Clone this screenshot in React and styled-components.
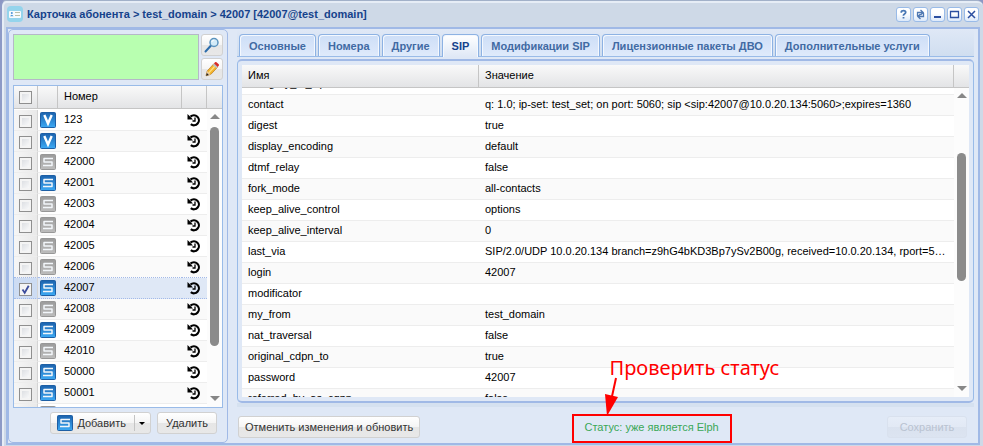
import React, { useLayoutEffect, useRef } from "react";
import styled, { createGlobalStyle, css } from "styled-components";

const GlobalStyle = createGlobalStyle`
  * {
    box-sizing: border-box;
  }
  body {
    margin: 0;
    background: #8c96c4;
    font-family: "Liberation Sans", Arial, sans-serif;
    font-size: 11px;
    color: #000;
  }
  button {
    font-family: inherit;
    font-size: 11px;
    color: #333;
    cursor: pointer;
  }
`;

const Window = styled.main`
  display: flex;
  flex-direction: column;
  height: 100vh;
  padding: 0 3px 1px 4px;
  background: #ced9e7;
  border-top: 1px solid #a2b1c9;
  border-left: 2px solid #8d9ac6;
  border-radius: 6px 6px 0 0;
  box-shadow: inset 1px 1px 0 1px #e6edf6;
`;

const TitleBar = styled.header`
  display: flex;
  align-items: center;
  gap: 4px;
  height: 26px;
  padding: 0 1px;
`;

const Title = styled.h1`
  flex: 1;
  margin: 0;
  font-size: 11px;
  line-height: 16px;
  color: #15428b;
`;

const Tools = styled.div`
  display: flex;
  gap: 2px;
`;

const Tool = styled.button`
  display: flex;
  width: 15px;
  height: 15px;
  padding: 0;
  border: 1px solid #99bbe8;
  border-radius: 3px;
  background: linear-gradient(#fff 40%, #dce9fa);
`;

const WindowBody = styled.div`
  flex: 1;
  display: flex;
  gap: 9px;
  min-height: 0;
  border: 2px solid #a0b9e6;
  background: #dfe8f6;
`;

const Sidebar = styled.aside`
  display: flex;
  flex-direction: column;
  width: 220px;
  padding: 4px 4px 8px;
  border: 1px solid #a0b9e6;
  border-radius: 5px;
`;

const SearchRow = styled.div`
  display: flex;
  gap: 2px;
  margin-bottom: 5px;
`;

const Filter = styled.textarea`
  flex: 1;
  min-width: 0;
  height: 46px;
  padding: 2px;
  border: 1px solid #b5b8c8;
  background: #b8ffb0;
  resize: none;
  outline: none;
`;

const SearchButtons = styled.div`
  display: flex;
  flex-direction: column;
  gap: 2px;
`;

const raised = css`
  border: 1px solid #d1d1d1;
  border-radius: 3px;
  background: linear-gradient(#fff, #f5f5f5 48%, #e6e6e6 52%, #e8e8e8);
`;

const IconButton = styled.button`
  ${raised}
  display: flex;
  align-items: center;
  justify-content: center;
  width: 22px;
  height: 22px;
  padding: 0;
`;

const Grid = styled.section`
  flex: 1;
  display: flex;
  flex-direction: column;
  min-width: 0;
  min-height: 0;
  border: ${p => (p.$framed ? "1px solid #99bbe8" : "0")};
  background: #fff;
`;

const GridTable = styled.table`
  width: 100%;
  table-layout: fixed;
  border-collapse: separate;
  border-spacing: 0;
`;

const Col = styled.col`
  width: ${p => (p.$width ? `${p.$width}px` : "auto")};
`;

const HeadCell = styled.th`
  height: 23px;
  padding: 0 6px 2px ${p => (p.$check ? 5 : 6)}px;
  border-right: 1px solid #c5c5c5;
  border-bottom: 1px solid #c5c5c5;
  background: linear-gradient(#f9f9f9, #e3e4e6);
  font-weight: normal;
  text-align: left;
  line-height: 13px;
  &:last-child {
    border-right: 0;
  }
`;

const GridBody = styled.div`
  flex: 1;
  display: flex;
  min-height: 0;
`;

const Viewport = styled.div`
  flex: 1;
  min-width: 0;
  overflow: hidden;
  padding-top: ${p => (p.$inset ? 1 : 0)}px;
`;

const Row = styled.tr`
  background: #fff;
  &:nth-child(even) {
    background: #fafafa;
  }
  &&[aria-selected="true"] {
    background: #dfe8f6;
  }
  &&[aria-selected="true"] td,
  &&:has(+ [aria-selected="true"]) td {
    border-bottom: 1px dotted #a3bae9;
  }
`;

const Cell = styled.td`
  height: 21px;
  padding: 0 6px 2px;
  border-bottom: 1px solid #ededed;
  line-height: 13px;
  white-space: nowrap;
  overflow: hidden;
  text-overflow: ellipsis;
`;

const CheckCell = styled(Cell)`
  padding: 0 0 0 5px;
  border-right: 1px solid #d4d4d4;
  background: ${p => (p.$selected ? "#cddcf3" : "linear-gradient(90deg, #f6f6f6, #e9e9e9)")};
`;

const IconCell = styled(Cell)`
  padding: 0 0 0 ${p => (p.$history ? 5 : 2)}px;
  text-overflow: clip;
  svg {
    display: block;
  }
`;

const Check = styled.input`
  display: block;
  appearance: none;
  width: 13px;
  height: 13px;
  margin: 2px 0 0;
  border: 1px solid #8f8f8f;
  background: linear-gradient(135deg, #d5d8dd, #fff);
  box-shadow: inset 0 0 0 2px #f4f4f4;
  &:checked {
    background: url("data:image/svg+xml,%3Csvg xmlns='http://www.w3.org/2000/svg' viewBox='0 0 11 11'%3E%3Cpath d='M2.5 5.5 4.7 8.8 8.7 1.7' fill='none' stroke='%233c4c9c' stroke-width='1.8'/%3E%3C/svg%3E");
    background-color: #f4f4f4;
    box-shadow: none;
  }
`;

const ScrollBar = styled.div`
  display: flex;
  flex-direction: column;
  align-items: center;
  width: 15px;
  padding: 5px 0 6px;
  background: #fcfcfc;
`;

const Arrow = styled.span`
  border: 5px solid transparent;
  border-top: ${p => (p.$down ? "5px solid #878787" : "0")};
  border-bottom: ${p => (p.$down ? "0" : "5px solid #878787")};
`;

const Track = styled.div`
  flex: 1;
  display: flex;
  flex-direction: column;
  padding: 8px 0;
`;

const Thumb = styled.div`
  width: 9px;
  border-radius: 5px;
  background: #8b8b8b;
`;

const SidebarActions = styled.div`
  display: flex;
  justify-content: flex-end;
  gap: 6px;
  padding: 4px 6px 0 0;
`;

const Button = styled.button`
  ${raised}
  display: flex;
  align-items: center;
  justify-content: center;
  height: 22px;
  min-width: ${p => p.$minWidth || 0}px;
  padding: 0 6px;
  line-height: 16px;
  white-space: nowrap;
  &:disabled {
    color: #b9c2d1;
    border-color: #d9e1ee;
    background: linear-gradient(#e6edf8, #e2e9f5 48%, #dae2ef 52%, #dce4f1);
  }
`;

const SplitButton = styled.div`
  ${raised}
  display: flex;
  height: 22px;
`;

const SplitPart = styled.button`
  display: flex;
  align-items: center;
  gap: 4px;
  padding: 0 8px 0 6px;
  border: 0;
  background: none;
  white-space: nowrap;
`;

const MenuPart = styled.button`
  display: flex;
  align-items: center;
  padding: 0 5px 0 4px;
  margin: 2px 0;
  border: 0;
  border-left: 1px solid #c4c4c4;
  background: none;
`;

const Caret = styled.span`
  border: 3px solid transparent;
  border-top-color: #000;
  border-bottom: 0;
`;

const Content = styled.section`
  flex: 1;
  display: flex;
  flex-direction: column;
  min-width: 0;
  padding-right: 4px;
`;

const TabStrip = styled.nav`
  display: flex;
  align-items: flex-end;
  gap: 2px;
  height: 28px;
  padding: 0 2px;
  border-bottom: 1px solid #99bbe8;
  background: linear-gradient(#dfe8f6, #d0def0);
`;

const Tab = styled.button`
  height: ${p => (p.$active ? 23 : 22)}px;
  margin-bottom: ${p => (p.$active ? -1 : 0)}px;
  padding: 1px 9px ${p => (p.$active ? 1 : 0)}px;
  border: 1px solid #8db2e3;
  border-bottom: 0;
  border-radius: 4px 4px 0 0;
  background: ${p => (p.$active ? "linear-gradient(#fff, #dfe8f6)" : "linear-gradient(#cddef7, #dfeafb)")};
  box-shadow: inset 1px 1px 0 #f4f8fe, inset -1px 0 0 #f4f8fe;
  color: ${p => (p.$active ? "#15428b" : "#416aa3")};
  font-weight: bold;
  line-height: 16px;
  white-space: nowrap;
`;

const Panel = styled.div`
  flex: 1;
  display: flex;
  min-height: 0;
  margin-top: 2px;
  padding: 4px;
  border: 1px solid #99bbe8;
  border-top: 2px solid #a0b9e6;
  border-bottom: 2px solid #a0b9e6;
  border-radius: 5px;
`;

const Footer = styled.footer`
  display: flex;
  align-items: center;
  justify-content: space-between;
  height: 40px;
  padding: 4px 7px 0 1px;
  border-top: 4px solid #d5e1f0;
`;

const StatusCallout = styled.div`
  position: relative;
  height: 29px;
  padding: 0 11px;
  margin: 2px 4px 0 0;
  border: 2px solid #f00;
  color: #3aa757;
  line-height: 23px;
  white-space: nowrap;
`;

const Note = styled.div`
  position: absolute;
  left: 36px;
  bottom: 57px;
  color: #f00;
  font-family: "Noto Sans", sans-serif;
  font-size: 20px;
  line-height: 32px;
`;

const NoteArrow = styled.svg`
  position: absolute;
  left: 27px;
  bottom: 24px;
`;

const SIcon = ({ on, letter = "S" }) => (
  <svg width="16" height="16" viewBox="0 0 16 16" aria-hidden="true">
    <defs>
      <linearGradient id="icon-on" x2="0" y2="1">
        <stop stopColor="#1c62ad" />
        <stop offset="1" stopColor="#3caaf5" />
      </linearGradient>
      <linearGradient id="icon-off" x2="0" y2="1">
        <stop stopColor="#9b9b9b" />
        <stop offset="1" stopColor="#bdbdbd" />
      </linearGradient>
    </defs>
    <rect x=".5" y=".5" width="15" height="15" rx="1" fill={on ? "url(#icon-on)" : "url(#icon-off)"} stroke={on ? "#1d5fa5" : "#979797"} />
    {letter === "V" ? (
      <path d="M4.300 3 8 11.500 11.700 3" fill="none" stroke="#fff" strokeWidth="2.400" />
    ) : (
      <path d="M13 4.500H4V8h8v3.500H3" fill="none" stroke="#f2f6fa" strokeWidth="1.500" strokeLinejoin="round" />
    )}
  </svg>
);

const HistoryIcon = () => (
  <svg width="14" height="14" viewBox="0 0 14 14" fill="none" stroke="#000" aria-hidden="true">
    <path d="M3.500 3.600A5 5 0 1 1 3.800 11.200" strokeWidth="2.200" />
    <path d="M.5 1v5.500H6z" fill="#000" stroke="none" />
    <path d="M8 4.500v3.500H5.500" strokeWidth="1.300" />
  </svg>
);

const SearchIcon = () => (
  <svg width="16" height="16" viewBox="0 0 16 16" aria-hidden="true">
    <path d="M1.500 14.500 7 8.500" stroke="#2c6cab" strokeWidth="2" strokeLinecap="round" />
    <circle cx="10" cy="5.500" r="4" fill="#d3ebf8" stroke="#5b93bd" strokeWidth="1.500" />
    <path d="M7.800 5a2.500 2.500 0 0 1 2.500-2" fill="none" stroke="#fff" />
  </svg>
);

const PencilIcon = () => (
  <svg width="16" height="16" viewBox="0 0 16 16" aria-hidden="true">
    <path d="m2 14.800 1.200-4.800 6.400-7 3.800 3.400-6.600 7z" fill="#f4b52d" stroke="#b9791c" strokeWidth=".7" />
    <path d="M4.800 11.800 11.500 4.500" stroke="#ffe083" strokeWidth="1.200" />
    <path d="m2 14.800 1.200-4.800 3.600 3.400z" fill="#eacb9c" />
    <path d="m2 14.800.8-2.900 2.100 2z" fill="#222" />
    <path d="m8.800 3.900 1.300-1.400 3.800 3.400-1.300 1.400z" fill="#b8c3c8" />
    <path d="m10 2.500 1-1.200q.7-.7 1.500 0l2.200 2q.8.8 0 1.500l-1 1.100z" fill="#d62c25" />
  </svg>
);

const CardIcon = () => (
  <svg width="16" height="16" viewBox="0 0 16 16" aria-hidden="true">
    <rect width="16" height="16" rx="4" fill="#94d4ec" />
    <rect x="2" y="5" width="12" height="7" rx="1" fill="#f7fbfd" />
    <circle cx="4.800" cy="7" r="1" fill="#4a94d8" />
    <path d="M3 10.300q1.800-3 3.600 0z" fill="#4a94d8" />
    <path d="M8 6.500h5M8 9.500h5" stroke="#b9bfa9" />
  </svg>
);

const toolGlyphs = {
  "Справка": <path d="M4.300 4.800V4q0-1.400 2.200-1.400T8.700 4.300Q8.700 5.200 7.500 6T6.500 7.800M6.500 9v1.600" strokeWidth="1.800" stroke="#4a78b5" />,
  "Обновить": <path d="M3.500 8V4.500h5M6.500 2l2.700 2.500L6.500 7M9.500 5v3.500h-5M6.500 11 3.800 8.500 6.500 6" strokeWidth="1.300" stroke="#5079b2" />,
  "Свернуть": <path d="M3 9h7" strokeWidth="2" />,
  "Развернуть": <path d="M2.500 3.500h8v6h-8zM2 3.500h9" strokeWidth="1.300" />,
  "Закрыть": <path d="m3 3 7 7M10 3l-7 7" strokeWidth="1.500" />
};

const subscribers = [
  ["123", true, "V"],
  ["222", true, "V"],
  ["42000", false],
  ["42001", true],
  ["42003", false],
  ["42004", false],
  ["42005", false],
  ["42006", false],
  ["42007", true],
  ["42008", false],
  ["42009", true],
  ["42010", false],
  ["50000", true],
  ["50001", true],
  ["50002", false]
];

const tabs = ["Основные", "Номера", "Другие", "SIP", "Модификации SIP", "Лицензионные пакеты ДВО", "Дополнительные услуги"];

const params = [
  ["category_to_sip", ""],
  ["contact", "q: 1.0; ip-set: test_set; on port: 5060; sip <sip:42007@10.0.20.134:5060>;expires=1360"],
  ["digest", "true"],
  ["display_encoding", "default"],
  ["dtmf_relay", "false"],
  ["fork_mode", "all-contacts"],
  ["keep_alive_control", "options"],
  ["keep_alive_interval", "0"],
  ["last_via", "SIP/2.0/UDP 10.0.20.134 branch=z9hG4bKD3Bp7ySv2B00g, received=10.0.20.134, rport=5060"],
  ["login", "42007"],
  ["modificator", ""],
  ["my_from", "test_domain"],
  ["nat_traversal", "false"],
  ["original_cdpn_to", "true"],
  ["password", "42007"],
  ["referred_by_as_cgpn", "false"]
];

const Scroller = ({ start, size, end }) => (
  <ScrollBar aria-hidden="true">
    <Arrow />
    <Track>
      <div style={{ flex: start }} />
      <Thumb style={{ flex: size }} />
      <div style={{ flex: end }} />
    </Track>
    <Arrow $down />
  </ScrollBar>
);

const Cols = ({ widths }) => (
  <colgroup>
    {widths.map((width, i) => (
      <Col key={i} $width={width} />
    ))}
  </colgroup>
);

const SubscriberGrid = () => (
  <Grid $framed>
    <GridTable>
      <Cols widths={[24, 20, null, 25, 15]} />
      <thead>
        <tr>
          <HeadCell $check>
            <Check type="checkbox" aria-label="Выбрать все" />
          </HeadCell>
          <HeadCell />
          <HeadCell>Номер</HeadCell>
          <HeadCell />
          <HeadCell />
        </tr>
      </thead>
    </GridTable>
    <GridBody>
      <Viewport $inset>
        <GridTable>
          <Cols widths={[24, 20, null, 25]} />
          <tbody>
            {subscribers.map(([number, on, letter]) => {
              const selected = number === "42007";
              return (
                <Row key={number} aria-selected={selected}>
                  <CheckCell $selected={selected}>
                    <Check type="checkbox" aria-label={number} defaultChecked={selected} />
                  </CheckCell>
                  <IconCell>
                    <SIcon on={on} letter={letter} />
                  </IconCell>
                  <Cell>{number}</Cell>
                  <IconCell $history>
                    <HistoryIcon />
                  </IconCell>
                </Row>
              );
            })}
          </tbody>
        </GridTable>
      </Viewport>
      <Scroller start={0} size={218} end={42} />
    </GridBody>
  </Grid>
);

const ParamGrid = () => {
  const viewport = useRef(null);

  useLayoutEffect(() => {
    viewport.current.scrollTop = 14;
  }, []);

  return (
    <Grid>
      <GridTable>
        <Cols widths={[237, null, 15]} />
        <thead>
          <tr>
            <HeadCell>Имя</HeadCell>
            <HeadCell>Значение</HeadCell>
            <HeadCell />
          </tr>
        </thead>
      </GridTable>
      <GridBody>
        <Viewport ref={viewport}>
          <GridTable>
            <Cols widths={[237, null]} />
            <tbody>
              {params.map(([name, value]) => (
                <Row key={name}>
                  <Cell>{name}</Cell>
                  <Cell>{value}</Cell>
                </Row>
              ))}
            </tbody>
          </GridTable>
        </Viewport>
        <Scroller start={46} size={126} end={95} />
      </GridBody>
    </Grid>
  );
};

const App = () => (
  <>
    <GlobalStyle />
    <Window>
      <TitleBar>
        <CardIcon />
        <Title>Карточка абонента &gt; test_domain &gt; 42007 [42007@test_domain]</Title>
        <Tools>
          {Object.entries(toolGlyphs).map(([label, glyph]) => (
            <Tool key={label} aria-label={label}>
              <svg width="13" height="13" viewBox="0 0 13 13" fill="none" stroke="#2c4fa0">
                {glyph}
              </svg>
            </Tool>
          ))}
        </Tools>
      </TitleBar>
      <WindowBody>
        <Sidebar>
          <SearchRow>
            <Filter aria-label="Фильтр" />
            <SearchButtons>
              <IconButton aria-label="Найти">
                <SearchIcon />
              </IconButton>
              <IconButton aria-label="Изменить">
                <PencilIcon />
              </IconButton>
            </SearchButtons>
          </SearchRow>
          <SubscriberGrid />
          <SidebarActions>
            <SplitButton>
              <SplitPart>
                <SIcon on />
                Добавить
              </SplitPart>
              <MenuPart aria-label="Варианты добавления">
                <Caret />
              </MenuPart>
            </SplitButton>
            <Button $minWidth={60}>Удалить</Button>
          </SidebarActions>
        </Sidebar>
        <Content>
          <TabStrip>
            {tabs.map(tab => (
              <Tab key={tab} $active={tab === "SIP"}>
                {tab}
              </Tab>
            ))}
          </TabStrip>
          <Panel>
            <ParamGrid />
          </Panel>
          <Footer>
            <Button>Отменить изменения и обновить</Button>
            <StatusCallout>
              Статус: уже является Elph
              <NoteArrow width="20" height="40" viewBox="0 0 20 40" aria-hidden="true">
                <path d="M15 1 10 24" stroke="#f00" strokeWidth="2" />
                <path d="M4 17 17 20 6 39z" fill="#f00" />
              </NoteArrow>
              <Note>Проверить статус</Note>
            </StatusCallout>
            <Button $minWidth={80} disabled>
              Сохранить
            </Button>
          </Footer>
        </Content>
      </WindowBody>
    </Window>
  </>
);

export default App;
